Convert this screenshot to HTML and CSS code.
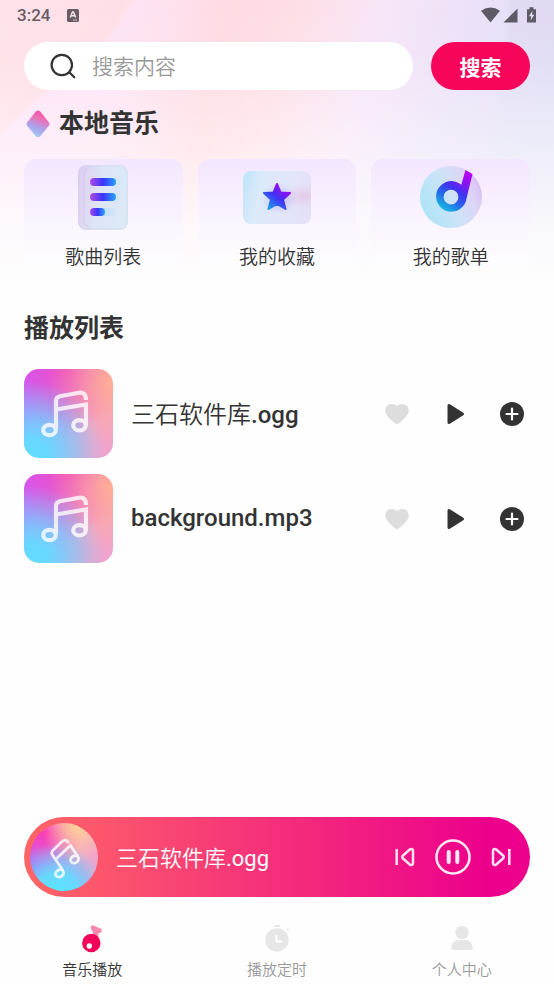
FILE: index.html
```html
<!DOCTYPE html>
<html lang="zh-CN">
<head>
<meta charset="utf-8">
<meta name="viewport" content="width=device-width, initial-scale=1">
<title>音乐播放</title>
<link rel="stylesheet" href="styles.css">
</head>
<body>
<svg class="defs" width="0" height="0" aria-hidden="true">
  <symbol id="note" viewBox="0 0 89 89">
    <g fill="none" stroke="#fff" stroke-width="4.200" opacity=".8">
      <path d="M32 60V32Q32 28.200 36 27.300L55 23.700Q62 22.500 62 31M32 40.500L62 35.500V56"/>
      <ellipse cx="25.500" cy="61" rx="6.300" ry="5.200"/>
      <ellipse cx="55.500" cy="56.300" rx="6.300" ry="5.200"/>
    </g>
  </symbol>
  <symbol id="heart" viewBox="0 0 24 22">
    <path fill="#ddd" d="M12 3.300C14 .9 17.500.3 20.200 1.600 23.500 3.200 24.500 7.400 23 10.700 21.600 13.700 17.500 17.500 14 20.200 12.700 21.200 11.300 21.200 10 20.200 6.500 17.500 2.400 13.700 1 10.700-.5 7.400.5 3.200 3.800 1.600 6.500.3 10 .9 12 3.300Z"/>
  </symbol>
  <symbol id="play" viewBox="0 0 18 22">
    <path fill="#333" stroke="#333" stroke-width="3" stroke-linejoin="round" d="M2 2.500V19.500L15.500 11Z"/>
  </symbol>
  <symbol id="plus" viewBox="0 0 24 24">
    <circle cx="12" cy="12" r="12" fill="#333"/>
    <path d="M12 6.500V17.500M6.500 12H17.500" stroke="#fff" stroke-width="2.200" stroke-linecap="round"/>
  </symbol>
</svg>

<div class="app">
  <svg class="backdrop" viewBox="0 0 554 300" preserveAspectRatio="none" aria-hidden="true">
    <defs>
      <linearGradient id="bgBase" x1="0" x2="1" y1="0" y2=".15">
        <stop offset="0" stop-color="#fde3fa"/>
        <stop offset=".24" stop-color="#fde3f4"/>
        <stop offset=".42" stop-color="#ffdbe2"/>
        <stop offset=".54" stop-color="#fedfe7"/>
        <stop offset=".68" stop-color="#f7e5f8"/>
        <stop offset=".85" stop-color="#ebe1f8"/>
        <stop offset="1" stop-color="#e2def5"/>
      </linearGradient>
      <linearGradient id="bgLeft" x1="0" x2="1" y1="0" y2="1">
        <stop offset="0" stop-color="#ffe3ea"/>
        <stop offset="1" stop-color="#ffdce4"/>
      </linearGradient>
      <linearGradient id="bgRight" x1="0" x2="0" y1="0" y2="1">
        <stop offset="0" stop-color="#e0d5ef" stop-opacity=".8"/>
        <stop offset=".6" stop-color="#dfe2f8" stop-opacity=".4"/>
        <stop offset="1" stop-color="#dfe6fa" stop-opacity="0"/>
      </linearGradient>
      <linearGradient id="bgFade" x1="0" x2="0" y1="0" y2="1">
        <stop offset="0" stop-color="#fefefe" stop-opacity="0"/>
        <stop offset=".2" stop-color="#fefefe" stop-opacity=".06"/>
        <stop offset=".5" stop-color="#fefefe" stop-opacity=".45"/>
        <stop offset=".75" stop-color="#fefefe" stop-opacity=".8"/>
        <stop offset=".95" stop-color="#fefefe"/>
      </linearGradient>
      <filter id="soft" x="-20%" y="-20%" width="140%" height="140%"><feGaussianBlur stdDeviation="2"/></filter>
    </defs>
    <rect width="554" height="300" fill="url(#bgBase)"/>
    <path d="M-20-20H142Q112 50 60 84Q22 108-20 158Z" fill="url(#bgLeft)" filter="url(#soft)"/>
    <path d="M511-20H580V250H465Q506 120 511-20Z" fill="url(#bgRight)" filter="url(#soft)"/>
    <rect width="554" height="300" fill="url(#bgFade)"/>
  </svg>

  <header class="status">
    <span class="clock">3:24</span>
    <svg width="12" height="13" viewBox="0 0 12 13" aria-hidden="true">
      <rect width="12" height="13" rx="1.500" fill="#685c66"/>
      <path d="M3.300 8.500L5.500 3H6.500L8.700 8.500M4.200 6.800H7.800" fill="none" stroke="#ffe2ea" stroke-width="1.400"/>
      <path d="M6 11H7.500M8.500 11H10" stroke="#ffe2ea"/>
    </svg>
    <span class="spacer"></span>
    <svg width="56" height="16" viewBox="0 0 56 16" fill="#5e5b66" aria-hidden="true">
      <path d="M0 3.800Q9.500-2.600 19 3.800L9.500 15.500Z"/>
      <path d="M22.500 15.500L36.500 1.500V15.500Z"/>
      <path d="M46 2.300H48.500V.2H52.500V2.300H55V15.500H46Z"/>
      <path d="M51.500 3.800L48 9.300H50.200L49.800 13.500L53.200 7.800H51Z" fill="#e9def3"/>
    </svg>
  </header>

  <form class="search">
    <label class="field">
      <svg width="26" height="26" viewBox="0 0 26 26" fill="none" stroke="#333" stroke-width="2.200" stroke-linecap="round" aria-hidden="true">
        <circle cx="11.800" cy="12" r="10.200"/><path d="M19.500 19.500L24.300 24.300"/>
      </svg>
      <input type="text" placeholder="搜索内容" aria-label="搜索内容">
    </label>
    <button class="submit" type="button">搜索</button>
  </form>

  <main>
    <h1 class="title local">
      <svg width="24" height="28" viewBox="0 0 24 28" aria-hidden="true">
        <defs><linearGradient id="gem" x1=".7" x2=".35" y1="0" y2="1">
          <stop offset="0" stop-color="#f04fa8"/><stop offset=".3" stop-color="#ee6fb4"/><stop offset=".65" stop-color="#a9a4f0"/><stop offset="1" stop-color="#a5cdec"/>
        </linearGradient></defs>
        <path fill="url(#gem)" d="M10 1.200Q12 0 14 1.200L23 12.500Q24 14 23 15.500L14 26.500Q12 28 10 26.500L1 15.500Q0 14 1 12.500Z"/>
      </svg>
      本地音乐
    </h1>

    <nav class="cards" aria-label="本地音乐">
      <a class="card" href="#songs">
        <svg width="72" height="72" viewBox="0 0 72 72" aria-hidden="true">
          <defs>
            <linearGradient id="page" x1="0" x2="1" y1="0" y2=".2">
              <stop offset="0" stop-color="#dccbf2"/><stop offset=".22" stop-color="#dfd7f3"/><stop offset=".5" stop-color="#dde5f7"/><stop offset="1" stop-color="#dce9f6"/>
            </linearGradient>
            <linearGradient id="bar" x1="0" x2="1"><stop offset="0" stop-color="#b04be6"/><stop offset=".5" stop-color="#3a35fa"/><stop offset="1" stop-color="#28a5fb"/></linearGradient>
            <linearGradient id="glow" x1="0" x2="1"><stop offset="0" stop-color="#a5d6fb"/><stop offset="1" stop-color="#cdeafa" stop-opacity="0"/></linearGradient>
          </defs>
          <rect x="11" y="4" width="50" height="65" rx="8" fill="url(#page)"/>
          <rect x="12" y="5" width="48" height="63" rx="7" fill="none" stroke="#cbd3ee" stroke-opacity=".5"/>
          <path d="M22 7Q17 8 17 13V60Q17 65 22 66" fill="none" stroke="#c9c4ec" stroke-opacity=".4" stroke-width="1.500"/>
          <path d="M45 17H60V26H45ZM45 32H60V41H45ZM34 47H49V55H34Z" fill="url(#glow)" opacity=".6"/>
          <rect x="23" y="17" width="26" height="8" rx="4" fill="url(#bar)"/>
          <rect x="23" y="32" width="26" height="8" rx="4" fill="url(#bar)"/>
          <rect x="23" y="47" width="15" height="8" rx="4" fill="url(#bar)"/>
        </svg>
        <span>歌曲列表</span>
      </a>
      <a class="card" href="#favorites">
        <svg width="72" height="72" viewBox="0 0 72 72" aria-hidden="true">
          <defs>
            <linearGradient id="box" x1="0" x2="1" y1=".3" y2=".5"><stop offset="0" stop-color="#c2e5f8"/><stop offset=".25" stop-color="#dceafa"/><stop offset=".65" stop-color="#e3e6fa"/><stop offset="1" stop-color="#e4e0f7"/></linearGradient>
            <linearGradient id="star" x1=".9" x2=".2" y1=".1" y2="1"><stop offset="0" stop-color="#b400f2"/><stop offset=".5" stop-color="#4430f5"/><stop offset="1" stop-color="#189ee8"/></linearGradient>
            <radialGradient id="blush"><stop offset="0" stop-color="#e4bfe2" stop-opacity=".7"/><stop offset="1" stop-color="#e4bfe2" stop-opacity="0"/></radialGradient>
            <radialGradient id="shade"><stop offset="0" stop-color="#8f93ea" stop-opacity=".6"/><stop offset="1" stop-color="#b9b5f3" stop-opacity="0"/></radialGradient>
            <clipPath id="boxClip"><rect x="2" y="10" width="68" height="53" rx="8"/></clipPath>
          </defs>
          <rect x="2" y="10" width="68" height="53" rx="8" fill="url(#box)"/>
          <g clip-path="url(#boxClip)">
            <ellipse cx="63" cy="35" rx="22" ry="12" fill="url(#blush)"/>
            <ellipse cx="38" cy="38" rx="18" ry="16" fill="url(#shade)"/>
          </g>
          <path fill="url(#star)" stroke="url(#star)" stroke-width="2" stroke-linejoin="round" d="M36 23L39.500 31.500L49 32L42 38.500L44.500 48L36 43L27.500 48L30 38.500L23 32L32.500 31.500Z"/>
        </svg>
        <span>我的收藏</span>
      </a>
      <a class="card" href="#playlists">
        <svg width="72" height="72" viewBox="0 0 72 72" aria-hidden="true">
          <defs>
            <linearGradient id="disc" x1="0" x2="1" y1=".75" y2=".35"><stop offset="0" stop-color="#a9e4f6"/><stop offset=".5" stop-color="#cde3f7"/><stop offset=".8" stop-color="#dcd6f7"/><stop offset="1" stop-color="#d9bdf3"/></linearGradient>
            <linearGradient id="dee" x1=".85" x2=".25" y1="0" y2="1"><stop offset="0" stop-color="#bd00f2"/><stop offset=".2" stop-color="#9b0df3"/><stop offset=".48" stop-color="#4032f0"/><stop offset=".72" stop-color="#2569ea"/><stop offset="1" stop-color="#16c2e2"/></linearGradient>
          </defs>
          <circle cx="36" cy="36" r="31" fill="url(#disc)"/>
          <path fill="url(#dee)" fill-rule="evenodd" d="M50.500 9L57.500 13L51.500 37.500A15.300 15.300 0 1 1 46.300 23.800ZM36 28.700A7.400 7.400 0 1 0 36 43.500A7.400 7.400 0 1 0 36 28.700Z"/>
        </svg>
        <span>我的歌单</span>
      </a>
    </nav>

    <h2 class="title">播放列表</h2>
    <ul class="songs" id="songs">
      <li class="song">
        <span class="cover"><svg width="89" height="89" aria-hidden="true"><use href="#note"/></svg></span>
        <span class="name"><span class="han">三石软件库</span>.ogg</span>
        <span class="actions">
          <button type="button" aria-label="收藏"><svg width="24" height="22"><use href="#heart"/></svg></button>
          <button type="button" aria-label="播放"><svg width="18" height="22"><use href="#play"/></svg></button>
          <button type="button" aria-label="添加"><svg width="24" height="24"><use href="#plus"/></svg></button>
        </span>
      </li>
      <li class="song">
        <span class="cover"><svg width="89" height="89" aria-hidden="true"><use href="#note"/></svg></span>
        <span class="name">background.mp3</span>
        <span class="actions">
          <button type="button" aria-label="收藏"><svg width="24" height="22"><use href="#heart"/></svg></button>
          <button type="button" aria-label="播放"><svg width="18" height="22"><use href="#play"/></svg></button>
          <button type="button" aria-label="添加"><svg width="24" height="24"><use href="#plus"/></svg></button>
        </span>
      </li>
    </ul>
  </main>

  <section class="player" aria-label="正在播放">
    <span class="cover disc"><svg width="60" height="60" aria-hidden="true"><use href="#note"/></svg></span>
    <span class="track"><span class="han">三石软件库</span>.ogg</span>
    <span class="controls">
      <button type="button" aria-label="上一首">
        <svg width="20" height="20" viewBox="0 0 20 20" fill="none" stroke="#ffe3f1" stroke-width="2.500" stroke-linejoin="round"><path d="M1.700 2V18"/><path d="M8 8.500L14.500 2.700Q18 .8 18 4V16Q18 19.200 14.500 17.300L8 11.500Q6.300 10 8 8.500Z"/></svg>
      </button>
      <button type="button" aria-label="暂停">
        <svg width="36" height="36" viewBox="0 0 36 36" fill="none" stroke="#ffe9f4"><circle cx="18" cy="18" r="16.500" stroke-width="2.500"/><path d="M13.700 13V23M22.300 13V23" stroke-width="4" stroke-linecap="round"/></svg>
      </button>
      <button type="button" aria-label="下一首">
        <svg width="20" height="20" viewBox="0 0 20 20" fill="none" stroke="#ffe3f1" stroke-width="2.500" stroke-linejoin="round"><path d="M18.300 2V18"/><path d="M12 8.500L5.500 2.700Q2 .8 2 4V16Q2 19.200 5.500 17.300L12 11.500Q13.700 10 12 8.500Z"/></svg>
      </button>
    </span>
  </section>

  <nav class="tabs" aria-label="主导航">
    <a class="tab active" href="#music">
      <svg width="28" height="28" viewBox="0 0 28 28" aria-hidden="true">
        <path d="M13 1.500Q14-.3 16 .7L22.500 3.500Q24.300 4.500 23.500 6.500Q22.600 8.500 20.500 7.900L20.300 12H14.500L15.200 7Q12 4 13 1.500Z" fill="#fb86ae"/>
        <circle cx="13.300" cy="18" r="9.200" fill="#f3045a"/><circle cx="11.300" cy="21" r="2.700" fill="#fff"/>
      </svg>
      音乐播放
    </a>
    <a class="tab" href="#timer">
      <svg width="28" height="28" viewBox="0 0 28 28" aria-hidden="true">
        <rect x="11" y="0" width="6" height="2" rx="1" fill="#e6e6e6"/><circle cx="24.700" cy="4.800" r="1.300" fill="#e6e6e6"/>
        <circle cx="14" cy="15" r="11.700" fill="#e6e6e6"/><path d="M13.500 10V16.500H19" fill="none" stroke="#fff" stroke-width="2"/>
      </svg>
      播放定时
    </a>
    <a class="tab" href="#me">
      <svg width="28" height="28" viewBox="0 0 28 28" fill="#e6e6e6" aria-hidden="true">
        <circle cx="14" cy="7.500" r="6.700"/><path d="M3 22.500Q4.500 15 11 15H17Q23.500 15 25 22.500Q25 25 22.500 25H5.500Q3 25 3 22.500Z"/>
      </svg>
      个人中心
    </a>
  </nav>
</div>
</body>
</html>
```

FILE: styles.css
```css
* { box-sizing: border-box; }

body {
  margin: 0;
  background: #fefefe;
  color: #333;
  font-family: Roboto, "Noto Sans CJK SC", sans-serif;
}

a { color: inherit; text-decoration: none; }

button {
  border: 0;
  padding: 0;
  background: none;
  font: inherit;
  cursor: pointer;
}

svg { display: block; flex: none; }

.defs { position: absolute; }

.app {
  position: relative;
  z-index: 0;
  display: flex;
  flex-direction: column;
  min-height: 100vh;
}

.backdrop {
  position: absolute;
  z-index: -1;
  top: 0;
  left: 0;
  width: 100%;
  height: 300px;
}

.status {
  display: flex;
  align-items: center;
  height: 30px;
  padding: 0 17px;
}

.clock {
  margin-right: 17px;
  color: #685c66;
  font-size: 17px;
  font-weight: 500;
}

.spacer { flex: 1; }

.search {
  display: flex;
  gap: 18px;
  margin: 12px 24px 0;
}

.field {
  display: flex;
  flex: 1;
  align-items: center;
  gap: 16px;
  min-width: 0;
  height: 48px;
  padding: 0 26px;
  border-radius: 24px;
  background: #fff;
}

.field input {
  flex: 1;
  min-width: 0;
  padding: 2px 0 0;
  border: 0;
  outline: 0;
  background: none;
  color: #333;
  font: inherit;
  font-size: 21px;
  font-weight: 350;
}

.field input::placeholder { color: #999; }

.submit {
  width: 99px;
  border-radius: 24px;
  background: #f7045b;
  color: #fff;
  font-size: 21px;
  font-weight: 700;
}

main {
  flex: 1;
  padding: 0 24px;
}

.title {
  margin: 40px 0 22px;
  font-size: 25px;
  font-weight: 700;
  line-height: 36px;
}

.local {
  display: flex;
  align-items: center;
  gap: 9px;
  margin: 16px 2px 17px;
}

.cards {
  display: grid;
  grid-template-columns: repeat(3, 1fr);
  gap: 15px;
}

.card {
  display: flex;
  flex-direction: column;
  align-items: center;
  gap: 12px;
  padding: 2px 0 0;
  height: 112px;
  border-radius: 12px;
  background: linear-gradient(#f3e6ff, #faf3ff 50%, #fefefe);
  font-size: 19px;
  font-weight: 350;
  line-height: 26px;
}

.songs {
  display: grid;
  gap: 16px;
  margin: 0;
  padding: 0;
  list-style: none;
}

.song {
  display: flex;
  align-items: center;
}

.cover {
  flex: none;
  border-radius: 15px;
  background:
    radial-gradient(circle at 10% 95%, #62dcff 0, #68d8ff 12%, rgba(120, 200, 255, 0) 62%),
    radial-gradient(circle at 100% 15%, #ffae94 0, rgba(255, 165, 150, 0) 55%),
    radial-gradient(circle at 50% 0, #ef48c4 0, rgba(240, 80, 200, 0) 62%),
    radial-gradient(circle at 0 0, #d153fb 0, rgba(195, 100, 255, 0) 70%),
    linear-gradient(90deg, #a99cf8, #f2a3cc 75%);
}

.name {
  flex: 1;
  min-width: 0;
  padding: 0 0 2px 18px;
  font-size: 24px;
  font-weight: 500;
}

.han { font-weight: 350; }

.actions {
  display: flex;
  align-items: center;
  padding-right: 6px;
}

.actions button:nth-child(2) { margin: 0 35px 0 38px; }

.player {
  display: flex;
  align-items: center;
  height: 80px;
  margin: 0 24px;
  padding: 0 19px 0 6px;
  border-radius: 40px;
  background: linear-gradient(90deg, #ff6666, #ec008c 92%);
  color: #fff;
}

.disc {
  display: grid;
  place-items: center;
  width: 68px;
  height: 68px;
  border-radius: 50%;
  background:
    radial-gradient(circle at 92% 22%, #ffd294 0, rgba(255, 175, 165, 0) 45%),
    radial-gradient(circle at 10% 90%, #56e8ff 0, #68d8ff 25%, rgba(120, 200, 255, 0) 60%),
    radial-gradient(circle at 48% 5%, #fb30b8 0, rgba(245, 60, 200, 0) 50%),
    linear-gradient(90deg, #b65cfb, #f2a3cc 75%);
  transform: rotate(-34deg);
}

.track {
  flex: 1;
  padding: 0 0 3px 18px;
  font-size: 22px;
}

.controls {
  display: flex;
  align-items: center;
  gap: 20px;
}

.tabs {
  display: grid;
  grid-template-columns: repeat(3, 1fr);
  height: 70px;
  margin-top: 17px;
}

.tab {
  display: flex;
  flex-direction: column;
  align-items: center;
  gap: 6px;
  padding-top: 11px;
  color: #999;
  font-size: 15px;
  font-weight: 350;
  line-height: 22px;
}

.active { color: #333; }
```
